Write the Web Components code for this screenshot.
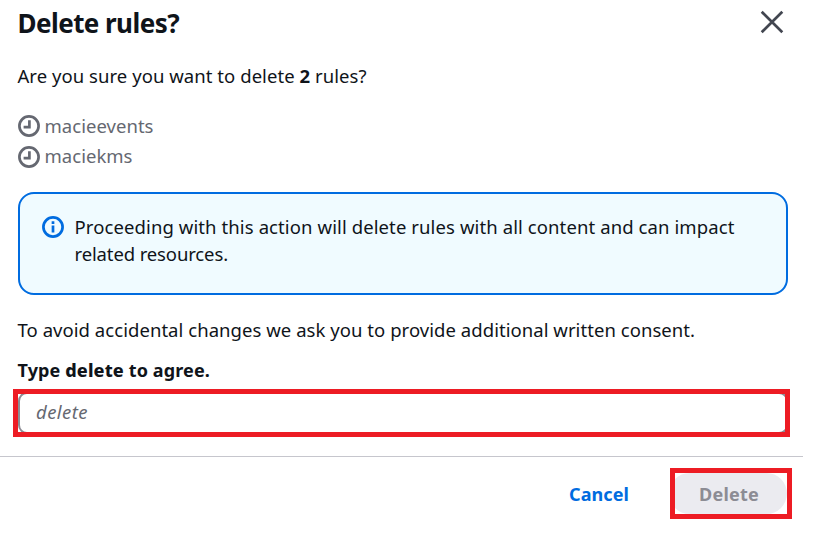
<!DOCTYPE html>
<html lang="en">
<head>
<meta charset="utf-8">
<title>Delete rules?</title>
<style>
html,body{margin:0;background:#fff}
body{width:821px;height:535px;overflow:hidden;font-family:"Noto Sans","Open Sans",sans-serif;font-size:18.5px;color:#0f141a}
</style>
</head>
<body>
<delete-dialog></delete-dialog>
<script>
const define = (name, html, init) => customElements.define(name, class extends HTMLElement {
  constructor() {
    super();
    this.attachShadow({ mode: 'open' }).innerHTML = html;
  }
  connectedCallback() { if (init) init(this); }
});

// One line of text, tracked so that it spans the width given in its attribute.
define('fit-text', `<style>:host{display:inline-block;white-space:nowrap}span{display:inline-block}</style><span><slot></slot></span>`, el => {
  const natural = el.shadowRoot.querySelector('span').getBoundingClientRect().width;
  const count = el.textContent.length;
  el.style.letterSpacing = ((+el.getAttribute('width') - natural) / count) + 'px';
});

define('close-icon', `<style>:host{display:block;width:24px;height:24px}svg{display:block}</style>
<svg width="24" height="24" viewBox="0 0 24 24" fill="none" stroke="#424650" stroke-width="2.7"><path d="M1.7 1.7 22.3 22.3M22.3 1.7 1.7 22.3"/></svg>`);

define('rule-item', `<style>:host{display:flex;align-items:center;gap:4.5px;height:30px;line-height:30px;color:#656871}svg{flex:none;display:block}:host(:last-child) svg{margin-top:1px}</style>
<svg width="22" height="22" viewBox="0 0 22 22" fill="none" stroke="#656871" stroke-width="2.7"><circle cx="11" cy="11" r="9.6"/><path d="M11.4 5.3V12.1H5.6"/></svg><slot></slot>`);

define('info-alert', `<style>:host{display:flex;box-sizing:border-box;height:103px;border:2px solid #006ce0;border-radius:16px;background:#f0fbff;padding:19px 22px;gap:10.5px;line-height:27px}
svg{flex:none;display:block;margin-top:3px}.body{display:flex;flex-direction:column;align-items:flex-start}</style>
<svg width="22" height="22" viewBox="0 0 22 22" fill="none" stroke="#006ce0" stroke-width="2.7"><circle cx="11" cy="11" r="9.6"/><path d="M11 5.2v2.7M11 9.5v7"/></svg><div class="body"><slot></slot></div>`);

define('highlight-frame', `<style>:host{display:block;box-sizing:border-box;border:5px solid #ed1c24;overflow:hidden}</style><slot></slot>`);

define('consent-input', `<style>:host{display:flex;align-items:center;box-sizing:border-box;width:770px;height:42px;margin-top:-2px;border:2px solid #8c8c94;border-radius:9px;padding:0 16px 3px;line-height:28px;font-style:italic;color:#656871}</style><slot></slot>`);

define('pill-button', `<style>:host{display:flex;align-items:center;justify-content:center;box-sizing:border-box;height:41px;width:118px;font-weight:700;font-size:18px;line-height:28px;color:#006ce0;border-radius:21px}
:host([disabled]){background:#ebebf0;color:#8c8c94;margin-left:-6px;padding-left:2px}</style><slot></slot>`);

define('delete-dialog', `<style>
:host{display:flex;flex-direction:column;height:535px}
header{display:flex;justify-content:space-between;align-items:flex-start;height:57px;padding:5px 37px 0 17.5px}
h1{margin:0;font-size:26px;line-height:36px;font-weight:700}
close-icon{margin-top:5px}
main{display:flex;flex-direction:column;padding:0 33px 0 18px}
p{margin:0 0 0 -.5px;line-height:28px;height:28px}
.list{padding:21px 0}
.consent{margin-top:21px}
.label{margin-top:12px;font-weight:700;font-size:18px}
.label b{font-weight:800}
highlight-frame.field{height:48px;width:777px;margin:5px 0 0 -5px}
footer{display:flex;justify-content:flex-end;box-sizing:border-box;width:803px;height:79px;margin-top:19px;border-top:1px solid #c6c6cd;padding:11px 11px 0 0}
footer>pill-button{width:100px;margin:5px 21px 0 0}
footer highlight-frame{width:122px;height:51px}
</style>
<header><h1><fit-text width="161.5">Delete rules?</fit-text></h1><close-icon></close-icon></header>
<main>
<p><fit-text width="349">Are you sure you want to delete <b>2</b> rules?</fit-text></p>
<div class="list"><rule-item><fit-text width="109">macieevents</fit-text></rule-item><rule-item><fit-text width="88">maciekms</fit-text></rule-item></div>
<info-alert><fit-text width="660">Proceeding with this action will delete rules with all content and can impact</fit-text><fit-text width="153.5">related resources.</fit-text></info-alert>
<p class="consent"><fit-text width="677.5">To avoid accidental changes we ask you to provide additional written consent.</fit-text></p>
<p class="label"><fit-text width="192.5">Type <b>delete</b> to agree.</fit-text></p>
<highlight-frame class="field"><consent-input><fit-text width="52">delete</fit-text></consent-input></highlight-frame>
</main>
<footer><pill-button><fit-text width="60">Cancel</fit-text></pill-button><highlight-frame><pill-button disabled><fit-text width="60">Delete</fit-text></pill-button></highlight-frame></footer>`);
</script>
</body>
</html>
